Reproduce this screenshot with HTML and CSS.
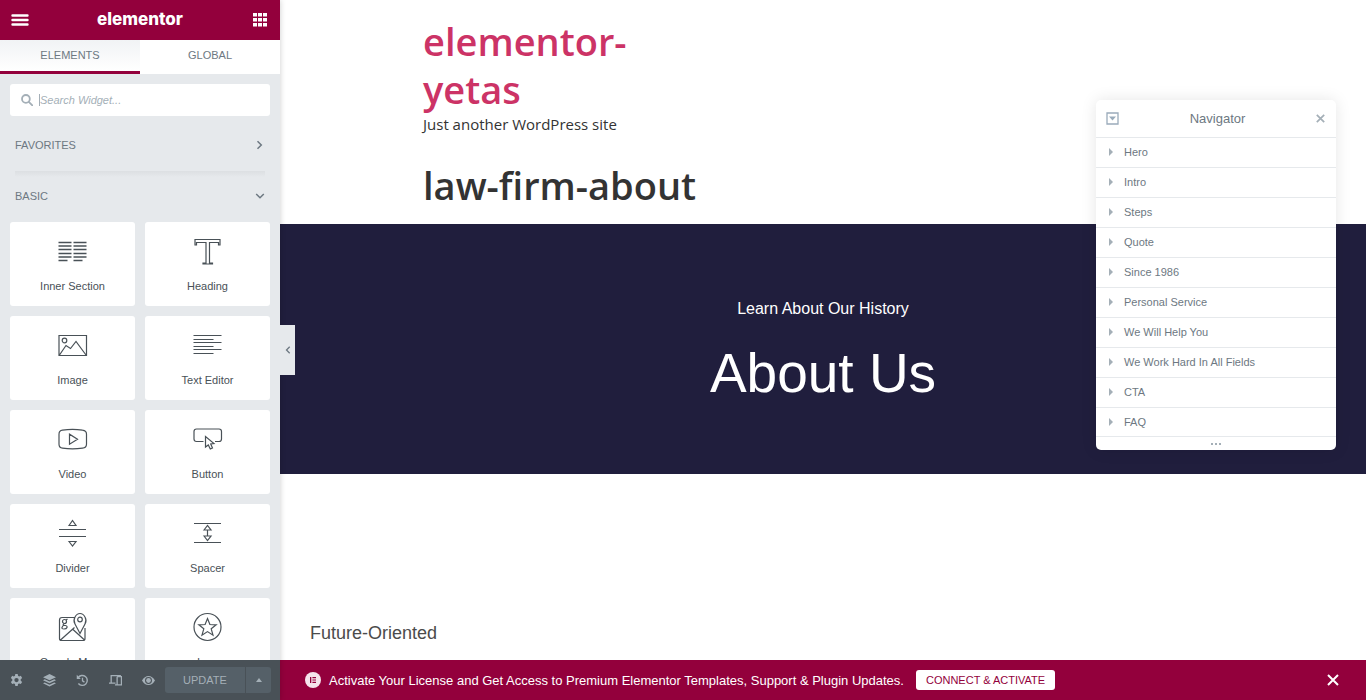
FILE: index.html
```html
<!DOCTYPE html>
<html lang="en">
<head>
<meta charset="utf-8">
<title>Elementor | law-firm-about</title>
<link rel="stylesheet" href="styles.css">
</head>
<body>
<aside class="panel">
  <header class="panel-header">
    <button class="header-btn" aria-label="Menu"><svg width="18" height="14" viewBox="0 0 18 14"><path d="M1.500 2.500h15M1.500 7h15M1.500 11.500h15" stroke="#fff" stroke-width="2.400" stroke-linecap="round"/></svg></button>
    <span class="logo">elementor</span>
    <button class="header-btn" aria-label="Widgets"><svg width="14" height="14" viewBox="0 0 14 14" fill="#fff"><path d="M0 0h4v3.500H0zM5 0h4v3.500H5zM10 0h4v3.500h-4zM0 5h4v3.500H0zM5 5h4v3.500H5zM10 5h4v3.500h-4zM0 10h4v3.500H0zM5 10h4v3.500H5zM10 10h4v3.500h-4z"/></svg></button>
  </header>
  <nav class="tabs">
    <button class="tab tab-active">ELEMENTS</button>
    <button class="tab">GLOBAL</button>
  </nav>
  <div class="panel-body">
    <div class="search">
      <svg width="12" height="12" viewBox="0 0 12 12" fill="none" stroke="#a4afb7" stroke-width="1.800"><circle cx="4.900" cy="4.900" r="3.900"/><path d="M7.800 7.800l3.500 3.500" stroke-linecap="round"/></svg>
      <span class="caret"></span>
      <input class="search-input" type="text" placeholder="Search Widget..." aria-label="Search Widget">
    </div>
    <button class="category category-first"><span>FAVORITES</span><svg width="10" height="10" viewBox="0 0 10 10"><path d="M2.500 1.200L6.300 5 2.500 8.800"/></svg></button>
    <div class="divider"></div>
    <button class="category"><span>BASIC</span><svg width="10" height="10" viewBox="0 0 10 10"><path d="M1.200 3L5 6.800 8.800 3"/></svg></button>
    <div class="widgets">
      <button class="widget"><svg viewBox="0 0 30 30"><path d="M.5 6.500h13M.5 10h13M.5 13.500h13M.5 17.500h13M.5 21h13M.5 24.500h9M15.500 6.500h13M15.500 10h13M15.500 13.500h13M15.500 17.500h13M15.500 21h13M15.500 24.500h9" stroke-width="1.500"/></svg><span>Inner Section</span></button>
      <button class="widget"><svg viewBox="0 0 30 30"><path d="M2 3.500h25v5.500h-1.500v-2.500h-9v20.500h3v1h-9.500v-1h3V6.500H3.500V9H2z"/></svg><span>Heading</span></button>
      <button class="widget"><svg viewBox="0 0 30 30"><path d="M1 5.500h27.500v20H1zM1.500 25l6.500-9.500 4.500 3 5.500-7 10 13.500"/><circle cx="6.500" cy="10.500" r="2.300"/></svg><span>Image</span></button>
      <button class="widget"><svg viewBox="0 0 30 30"><path d="M.5 5.500h28M.5 9.500h20M.5 12.500h28M.5 16.500h20M.5 19.500h28M.5 23.500h20"/></svg><span>Text Editor</span></button>
      <button class="widget"><svg viewBox="0 0 30 30"><path d="M4.500 6.200q10-1.500 20 0 4 .5 4 4v10q0 3.500-4 4-10 1.500-20 0-3.500-.5-3.500-4v-10q0-3.500 3.500-4zM11.500 10.200v10l8-5z"/></svg><span>Video</span></button>
      <button class="widget"><svg viewBox="0 0 30 30"><path d="M10.500 17.500h-7q-2.500 0-2.500-2.500V7.500Q1 5 3.500 5h22.500q2.500 0 2.500 2.500V15q0 2.500-2.500 2.500h-4M12.500 12.500v10.500l2.800-2 2 4 2.200-1-1.800-4 3.300-.5z"/></svg><span>Button</span></button>
      <button class="widget"><svg viewBox="0 0 30 30"><path d="M1 11.500h27M1 18.500h27M11 7.500l3.500-5 3.500 5zM11 23.500l3.500 4.500 3.500-4.500z"/></svg><span>Divider</span></button>
      <button class="widget"><svg viewBox="0 0 30 30"><path d="M1 5.500h27M1 24.500h27M11 12l3.500-4.500 3.500 4.500zM11 18l3.500 4.500 3.500-4.500zM14.500 12v6"/></svg><span>Spacer</span></button>
      <button class="widget"><svg viewBox="0 0 30 30"><path d="M16.500 5.500H4Q1.500 5.500 1.500 8v18.500q0 2 2 2h21.500q2 0 2-2V16M2.500 28l14-12.500M15 17.500L26.500 28M22 21.500l-5-9.500q-2-3.500 0-7 1.800-3.500 5-3.500t5 3.500q2 3.500 0 7z"/><circle cx="22" cy="7.500" r="2.300"/><circle cx="6.500" cy="9.500" r="2"/><path d="M8 8l1.500-1M6.500 11.500q-2 1-1 2h2q2 .5 1.500 2t-3 1.500-2-1.500 1.500-2"/></svg><span>Google Maps</span></button>
      <button class="widget"><svg viewBox="0 0 30 30"><circle cx="14.500" cy="15" r="13.500"/><path d="M14.500 6.500l2.400 6 6.300.3-5 4 1.800 6.400-5.500-3.600-5.500 3.600 1.800-6.400-5-4 6.300-.3z"/></svg><span>Icon</span></button>
    </div>
  </div>
  <footer class="panel-footer">
    <button class="tool" aria-label="Settings"><svg viewBox="0 0 12 12"><path fill-rule="evenodd" d="M4.900 0h2.200l.3 1.700 1 .6L10 1.700l1.200 2-1.300 1.100v1.400l1.300 1.100-1.200 2-1.600-.6-1 .6-.3 1.700H4.900l-.3-1.700-1-.6-1.600.6-1.200-2 1.300-1.100V4.800L.8 3.700l1.200-2 1.600.6 1-.6zM6 3.600a2 2 0 100 4 2 2 0 000-4z"/></svg></button>
    <button class="tool" aria-label="Navigator"><svg viewBox="0 0 12 12"><path d="M6 0l6 2.900-6 2.900-6-2.900zM1.600 4.900L6 7l4.400-2.100L12 5.700 6 8.600 0 5.700zM1.600 7.800L6 9.900l4.400-2.100 1.600.8-6 2.900-6-2.900z"/></svg></button>
    <button class="tool" aria-label="History"><svg viewBox="0 0 12 12"><path d="M1.900 3.500a4.600 4.600 0 11.300 5.300" fill="none" stroke="#a4afb7" stroke-width="1.300"/><path d="M.7.800v3.700h3.700z"/><path d="M6 3.500v2.800l1.800 1.200" fill="none" stroke="#a4afb7" stroke-width="1.200"/></svg></button>
    <button class="tool" aria-label="Responsive mode"><svg viewBox="0 0 12 12"><path d="M2 8V1.500h9M0 8.500h6M7.500 2.500h4v7.500H5.500M7.500 2.500V10" fill="none" stroke="#a4afb7" stroke-width="1.200"/></svg></button>
    <button class="tool" aria-label="Preview"><svg viewBox="0 0 12 12"><path fill-rule="evenodd" d="M0 6q2.400-4.200 6-4.200T12 6q-2.400 4.200-6 4.200T0 6zm6-3.200a3.200 3.200 0 100 6.400 3.200 3.200 0 000-6.400z"/><circle cx="6" cy="6" r="2.200"/></svg></button>
    <div class="update-group">
      <button class="update">UPDATE</button>
      <button class="update-more" aria-label="Save options"><svg width="6" height="4" viewBox="0 0 6 4"><path d="M0 4l3-4 3 4z" fill="#a4afb7"/></svg></button>
    </div>
  </footer>
  <button class="collapse" aria-label="Hide panel"><svg width="6" height="8" viewBox="0 0 6 8"><path d="M4.700.8L1.500 4l3.200 3.200" fill="none" stroke="#6d7882" stroke-width="1.300"/></svg></button>
</aside>
<main class="preview">
  <div class="page">
    <div class="container">
      <div class="branding">
        <h2 class="site-title"><a href="#">elementor-yetas</a></h2>
        <p class="tagline">Just another WordPress site</p>
      </div>
      <h1 class="page-title">law-firm-about</h1>
    </div>
    <section class="hero">
      <p class="hero-sub">Learn About Our History</p>
      <h2 class="hero-title">About Us</h2>
    </section>
    <section class="intro"><p class="intro-label">Future-Oriented</p></section>
  </div>
  <div class="banner">
    <svg width="16" height="16" viewBox="0 0 16 16"><circle cx="8" cy="8" r="8" fill="#f6e3ec"/><path d="M5 5h1.300v6H5zM7.400 5h3.600v1.200H7.400zM7.400 7.400h3.600v1.200H7.400zM7.400 9.800h3.600V11H7.400z" fill="#93003c"/></svg>
    <span class="banner-text">Activate Your License and Get Access to Premium Elementor Templates, Support &amp; Plugin Updates.</span>
    <a class="connect" href="#">CONNECT &amp; ACTIVATE</a>
    <button class="banner-close" aria-label="Dismiss"><svg width="12" height="12" viewBox="0 0 12 12"><path d="M1 1l10 10M11 1L1 11" stroke="#fff" stroke-width="2"/></svg></button>
  </div>
</main>
<div class="navigator">
  <div class="nav-header">
    <button class="nav-btn" aria-label="Expand all"><svg width="13" height="13" viewBox="0 0 13 13"><path d="M1 1h11v11H1z" fill="none" stroke="#9aabbb" stroke-width="1.300"/><path d="M3 4.500h7L6.500 8.500z" fill="#9aabbb"/></svg></button>
    <span class="nav-title">Navigator</span>
    <button class="nav-btn" aria-label="Close"><svg width="9" height="9" viewBox="0 0 9 9"><path d="M.8.800l7.400 7.400M8.200.800L.8 8.200" stroke="#a4afb7" stroke-width="1.700"/></svg></button>
  </div>
  <ul class="nav-list">
    <li><button class="nav-item">Hero</button></li>
    <li><button class="nav-item">Intro</button></li>
    <li><button class="nav-item">Steps</button></li>
    <li><button class="nav-item">Quote</button></li>
    <li><button class="nav-item">Since 1986</button></li>
    <li><button class="nav-item">Personal Service</button></li>
    <li><button class="nav-item">We Will Help You</button></li>
    <li><button class="nav-item">We Work Hard In All Fields</button></li>
    <li><button class="nav-item">CTA</button></li>
    <li><button class="nav-item">FAQ</button></li>
  </ul>
  <div class="nav-footer"><svg width="10" height="2" viewBox="0 0 10 2"><path d="M0 0h2v2H0zM4 0h2v2H4zM8 0h2v2H8z" fill="#a4afb7"/></svg></div>
</div>
</body>
</html>
```
FILE: styles.css
```css
* { box-sizing: border-box; }
body { margin: 0; height: 100vh; display: flex; overflow: hidden; font-family: Arial, "Liberation Sans", sans-serif; background: #fff; }
h1, h2, p, ul { margin: 0; padding: 0; }
button { border: 0; margin: 0; padding: 0; background: none; font-family: inherit; cursor: pointer; }
svg { display: block; flex: none; }

.panel { position: relative; z-index: 2; flex: none; width: 280px; display: flex; flex-direction: column; background: #e6e9ec; box-shadow: 0 0 6px rgba(0, 0, 0, .2); }
.panel-header { flex: none; height: 40px; padding: 0 11px; display: flex; align-items: center; justify-content: space-between; background: #93003c; }
.header-btn { width: 18px; display: flex; justify-content: center; }
.logo { padding-bottom: 2px; color: #fff; font: 800 17px/24px Inter, sans-serif; }
.tabs { flex: none; display: flex; height: 34px; }
.tab { flex: 1; padding-bottom: 2px; background: #fff; border-bottom: 3px solid #fff; color: #6d7882; font-size: 11px; }
.tab-active { background: linear-gradient(#f1f3f5, #fff); border-bottom-color: #93003c; }

.panel-body { flex: 1; min-height: 0; overflow: hidden; padding: 10px; }
.search { display: flex; align-items: center; height: 32px; padding: 0 11px; background: #fff; border-radius: 3px; }
.caret { width: 1px; height: 12px; margin-left: 6px; background: #a4afb7; }
.search-input { flex: 1; min-width: 0; border: 0; padding: 0; outline: 0; background: none; font: italic 11px/16px Arial, "Liberation Sans", sans-serif; color: #6d7882; }
.search-input::placeholder { color: #a4afb7; opacity: 1; }
.category { display: flex; align-items: center; justify-content: space-between; width: 100%; height: 51px; padding: 0 5px 2px; font-size: 11px; color: #6d7882; }
.category-first { height: 55px; padding: 3px 5px 0; }
.category path { fill: none; stroke: #6d7882; stroke-width: 1.500; }
.divider { height: 6px; margin: 0 5px -6px; background: linear-gradient(#dcdfe2, #e6e9ec); }
.widgets { display: grid; grid-template-columns: 1fr 1fr; gap: 10px; }
.widget { height: 84px; padding-top: 14px; display: flex; flex-direction: column; align-items: center; gap: 13px; background: #fff; border-radius: 3px; color: #495157; font-size: 11px; line-height: 14px; }
.widget svg { width: 30px; height: 30px; fill: none; stroke: #495157; stroke-width: 1.200; }

.panel-footer { flex: none; height: 40px; display: flex; align-items: center; background: #495157; }
.tool { width: 33px; height: 40px; display: flex; align-items: center; justify-content: center; }
.tool svg { width: 13px; height: 13px; fill: #a4afb7; }
.update-group { display: flex; gap: 1px; width: 106px; height: 26px; }
.update { flex: 1; background: #556068; border-radius: 3px 0 0 3px; color: #a4afb7; font-size: 11px; }
.update-more { width: 25px; display: flex; align-items: center; justify-content: center; background: #556068; border-radius: 0 3px 3px 0; }
.collapse { position: absolute; left: 100%; top: 50%; width: 15px; height: 50px; margin-top: -25px; display: flex; align-items: center; justify-content: center; background: #e6e9ec; }

.preview { flex: 1; min-width: 0; display: flex; flex-direction: column; }
.page { flex: 1; min-height: 0; overflow: hidden; padding-top: 17px; color: #333; }
.container { max-width: 800px; margin: 0 auto; }
.branding { max-width: 200px; }
.site-title, .page-title { font: 600 38px/48px "Open Sans", sans-serif; }
.site-title a { color: #c36; text-decoration: none; }
.tagline { font: 15px/22px "Open Sans", sans-serif; }
.page-title { padding: 26px 0 15px; box-sizing: content-box; }
.hero { height: 250px; padding-top: 73px; background: #201e3d; color: #fff; text-align: center; }
.hero-sub { font-size: 16px; line-height: 24px; }
.hero-title { margin-top: 18px; font-size: 55px; line-height: 68px; font-weight: 400; }
.intro { padding: 147px 30px 0; }
.intro-label { font-size: 18px; line-height: 24px; color: #4b4b4b; }

.banner { flex: none; height: 40px; padding: 0 27px 0 25px; display: flex; align-items: center; background: #93003c; color: #fff; }
.banner-text { margin-left: 8px; font-size: 13px; }
.connect { margin-left: 12px; height: 20px; padding: 0 10px; background: #fff; border-radius: 3px; color: #93003c; font-size: 11px; line-height: 20px; text-decoration: none; }
.banner-close { margin-left: auto; }

.navigator { position: absolute; z-index: 3; right: 30px; top: 100px; width: 240px; background: #fff; border-radius: 5px; box-shadow: 0 0 16px rgba(0, 0, 0, .1); color: #6d7882; }
.nav-header { display: flex; align-items: center; justify-content: space-between; height: 37px; padding: 0 11px 0 10px; }
.nav-title { font-size: 13px; }
.nav-list { list-style: none; }
.nav-item { display: flex; align-items: center; width: 100%; height: 30px; padding: 0 0 2px 13px; border-top: 1px solid #e6e9ec; color: #6d7882; font-size: 11px; }
.nav-item::before { content: ""; margin-right: 11px; border-left: 4px solid #a4afb7; border-top: 4px solid transparent; border-bottom: 4px solid transparent; }
.nav-footer { height: 14px; margin-top: -1px; display: flex; align-items: center; justify-content: center; border-top: 1px solid #e6e9ec; }
```
